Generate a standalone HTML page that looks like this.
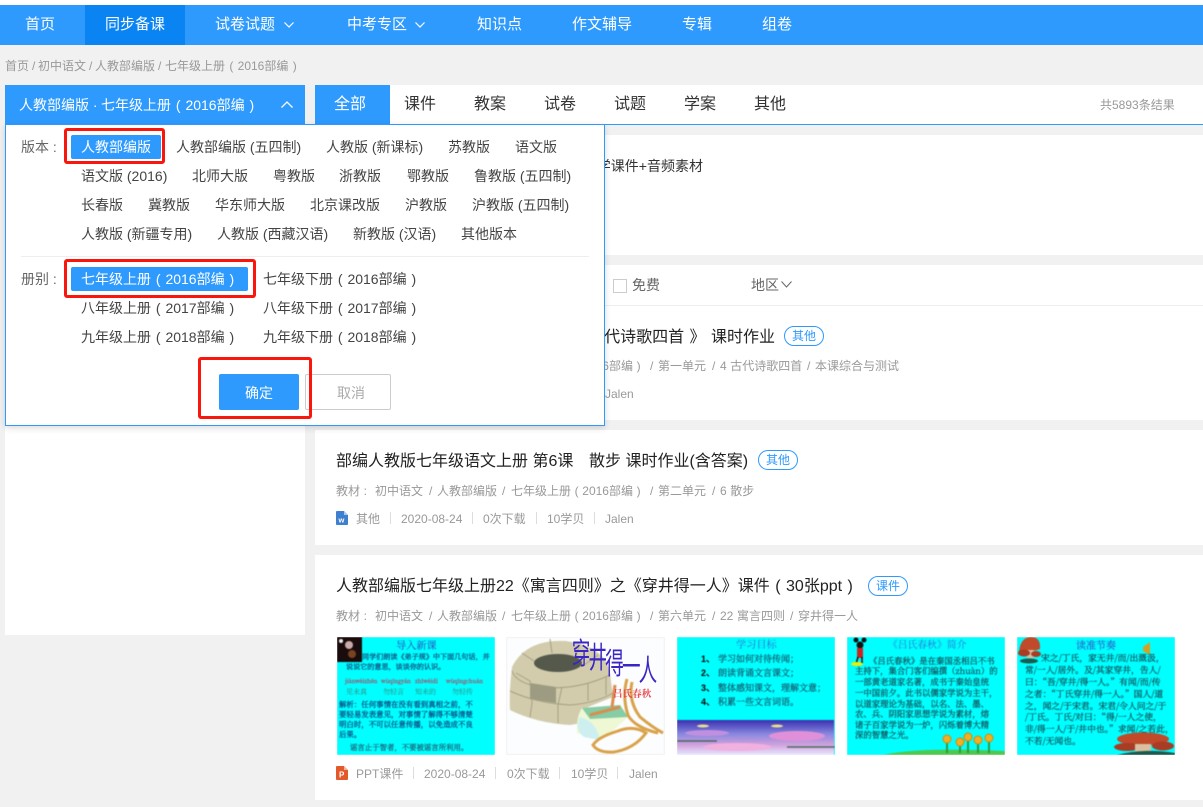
<!DOCTYPE html>
<html lang="zh"><head><meta charset="utf-8"><title>同步备课</title>
<style>
*{box-sizing:border-box;margin:0;padding:0}
html,body{width:1203px;height:807px;overflow:hidden}
body{background:#f1f1f1;position:relative;font-family:"Liberation Sans","Noto Sans CJK SC",sans-serif;color:#333}
.b{position:absolute}
.t{position:absolute;white-space:nowrap;line-height:20px;height:20px}
.nav{color:#fff;font-size:15px;margin-top:1px}
.tab{font-size:16px;color:#333;line-height:24px;height:24px;margin-top:1px}
.o{font-size:14px;color:#444}
.w{word-spacing:1px}
.title{font-size:16px;color:#222;line-height:24px;height:24px}
.m{font-size:12px;color:#999;word-spacing:.3px}
.sep{position:absolute;width:1px;height:12px;background:#ddd}
.tag{position:absolute;height:20px;width:40px;border:1px solid #2e9afe;border-radius:10px;color:#2e9afe;font-size:12px;line-height:18px;text-align:center}
.red{position:absolute;border:3px solid #f9160c;border-radius:3px}
.thumb{position:absolute;top:637px;height:118px;display:block}
.thumb text{font-family:"Noto Serif CJK SC","Liberation Serif",serif}
.sl{filter:blur(.45px)}
</style></head><body>
<div class="b" style="left:0;top:0;width:1203px;height:5px;background:#fff"></div>
<div class="b" style="left:0;top:5px;width:1203px;height:40px;background:#2e9afe"></div>
<div class="b" style="left:85px;top:5px;width:100px;height:40px;background:#0a84f2"></div>
<div class="t nav" style="left:25px;top:14px">首页</div>
<div class="t nav" style="left:105px;top:14px">同步备课</div>
<div class="t nav" style="left:215px;top:14px">试卷试题</div>
<svg class="b" style="left:283px;top:21px" width="12" height="8"><path d="M1.500 1.500L6 6L10.500 1.500" fill="none" stroke="#fff" stroke-width="1.200"/></svg>
<div class="t nav" style="left:347px;top:14px">中考专区</div>
<svg class="b" style="left:414px;top:21px" width="12" height="8"><path d="M1.500 1.500L6 6L10.500 1.500" fill="none" stroke="#fff" stroke-width="1.200"/></svg>
<div class="t nav" style="left:477px;top:14px">知识点</div>
<div class="t nav" style="left:572px;top:14px">作文辅导</div>
<div class="t nav" style="left:682px;top:14px">专辑</div>
<div class="t nav" style="left:762px;top:14px">组卷</div>

<div class="t m" style="left:5px;top:56px;word-spacing:0">首页</div>
<div class="t m" style="left:32px;top:56px">/</div>
<div class="t m" style="left:38px;top:56px">初中语文</div>
<div class="t m" style="left:89px;top:56px">/</div>
<div class="t m" style="left:95px;top:56px">人教部编版</div>
<div class="t m" style="left:158px;top:56px">/</div>
<div class="t m" style="left:165px;top:56px;word-spacing:1px">七年级上册 ( 2016部编 )</div>

<div class="b" style="left:315px;top:85px;width:888px;height:40px;background:#fff"></div>
<div class="b" style="left:315px;top:85px;width:75px;height:40px;background:#2e9afe"></div>
<div class="t tab" style="left:334px;top:92px;color:#fff">全部</div>
<div class="t tab" style="left:404px;top:92px">课件</div>
<div class="t tab" style="left:474px;top:92px">教案</div>
<div class="t tab" style="left:544px;top:92px">试卷</div>
<div class="t tab" style="left:614px;top:92px">试题</div>
<div class="t tab" style="left:684px;top:92px">学案</div>
<div class="t tab" style="left:754px;top:92px">其他</div>
<div class="t m" style="left:1100px;top:95px">共5893条结果</div>
<div class="b" style="left:315px;top:124px;width:888px;height:1px;background:#2e9afe"></div>

<!-- right cards -->
<div class="b" style="left:315px;top:135px;width:888px;height:120px;background:#fff"></div>
<div class="t" style="right:500px;top:156px;font-size:14px;color:#333">教学课件+音频素材</div>
<div class="b" style="left:315px;top:265px;width:888px;height:155px;background:#fff"></div>
<div class="b" style="left:315px;top:305px;width:888px;height:1px;background:#eee"></div>
<div class="b" style="left:613px;top:279px;width:14px;height:14px;border:1px solid #ccc;background:#fff"></div>
<div class="t" style="left:632px;top:275px;font-size:14px;color:#666">免费</div>
<div class="t" style="left:751px;top:275px;font-size:14px;color:#666">地区</div>
<svg class="b" style="left:780px;top:280px" width="13" height="9"><path d="M1.500 1.500L6.500 7L11.500 1.500" fill="none" stroke="#666" stroke-width="1"/></svg>
<div class="t title w" style="right:428px;top:326px">4《古代诗歌四首 》 课时作业</div>
<div class="tag" style="left:784px;top:326px">其他</div>
<div class="t m" style="left:511px;top:356px">七年级上册 ( 2016部编 )</div>
<div class="t m" style="left:650px;top:356px">/</div><div class="t m" style="left:658px;top:356px">第一单元</div>
<div class="t m" style="left:712px;top:356px">/</div><div class="t m" style="left:720px;top:356px">4 古代诗歌四首</div>
<div class="t m" style="left:807px;top:356px">/</div><div class="t m" style="left:815px;top:356px">本课综合与测试</div>
<div class="t m" style="left:605px;top:384px">Jalen</div>

<div class="b" style="left:315px;top:430px;width:888px;height:115px;background:#fff"></div>
<div class="t title" style="left:336px;top:450px">部编人教版七年级语文上册 第6课</div>
<div class="t title" style="left:589px;top:450px">散步 课时作业(含答案)</div>
<div class="tag" style="left:758px;top:450px">其他</div>
<div class="t m" style="left:336px;top:481px">教材 :</div><div class="t m" style="left:375px;top:481px">初中语文</div>
<div class="t m" style="left:429px;top:481px">/</div><div class="t m" style="left:437px;top:481px">人教部编版</div>
<div class="t m" style="left:502px;top:481px">/</div><div class="t m" style="left:511px;top:481px">七年级上册 ( 2016部编 )</div>
<div class="t m" style="left:650px;top:481px">/</div><div class="t m" style="left:658px;top:481px">第二单元</div>
<div class="t m" style="left:712px;top:481px">/</div><div class="t m" style="left:720px;top:481px">6 散步</div>
<svg class="b" style="left:336px;top:511px" width="12" height="14"><path d="M0 1Q0 0 1 0H8L12 4V13Q12 14 11 14H1Q0 14 0 13Z" fill="#3f7fcf"/><path d="M8 0L12 4H8Z" fill="#a9c8ef"/><text x="2.500" y="11.500" font-size="7.500" font-weight="bold" fill="#fff" font-family="Liberation Sans">w</text></svg>
<div class="t m" style="left:356px;top:509px">其他</div><div class="sep" style="left:390px;top:512px"></div>
<div class="t m" style="left:401px;top:509px">2020-08-24</div><div class="sep" style="left:472px;top:512px"></div>
<div class="t m" style="left:483px;top:509px">0次下载</div><div class="sep" style="left:536px;top:512px"></div>
<div class="t m" style="left:547px;top:509px">10学贝</div><div class="sep" style="left:594px;top:512px"></div>
<div class="t m" style="left:605px;top:509px">Jalen</div>

<div class="b" style="left:315px;top:555px;width:888px;height:245px;background:#fff"></div>
<div class="t title w" style="left:336px;top:575px">人教部编版七年级上册22《寓言四则》之《穿井得一人》课件 ( 30张ppt )</div>
<div class="tag" style="left:868px;top:576px">课件</div>
<div class="t m" style="left:336px;top:606px">教材 :</div><div class="t m" style="left:375px;top:606px">初中语文</div>
<div class="t m" style="left:429px;top:606px">/</div><div class="t m" style="left:437px;top:606px">人教部编版</div>
<div class="t m" style="left:502px;top:606px">/</div><div class="t m" style="left:511px;top:606px">七年级上册 ( 2016部编 )</div>
<div class="t m" style="left:650px;top:606px">/</div><div class="t m" style="left:658px;top:606px">第六单元</div>
<div class="t m" style="left:712px;top:606px">/</div><div class="t m" style="left:720px;top:606px">22 寓言四则</div>
<div class="t m" style="left:790px;top:606px">/</div><div class="t m" style="left:798px;top:606px">穿井得一人</div>

<!-- slide 1 -->
<svg class="thumb" style="left:337px" width="158" height="118" viewBox="0 0 158 118"><g class="sl">
<rect width="158" height="118" fill="#00ffff"/>
<rect width="25" height="25" fill="#1a0c0c"/><circle cx="12" cy="8" r="4" fill="#caa"/><circle cx="15" cy="17" r="4" fill="#742"/><circle cx="4" cy="4" r="2" fill="#eee"/>
<text x="59" y="12" font-size="10.200" fill="#2a3fb8">导入新课</text>
<g font-size="7.100" fill="#123a70" stroke="#123a70" stroke-width=".2"><text x="25" y="22">同学们朗读《弟子规》中下面几句话，并</text>
<text x="9" y="32">说说它的意思，谈谈你的认识。</text></g>
<g font-size="5.500" fill="#c0304c" stroke="#c0304c" stroke-width=".15"><text x="8" y="46">jiànwèizhēn</text><text x="44" y="46">wùqīngyán</text><text x="78" y="46">zhīwèidí</text><text x="109" y="46">wùqīngchuán</text></g>
<g font-size="7" fill="#3e7c70"><text x="9" y="57">见未真</text><text x="46" y="57">勿轻言</text><text x="78" y="57">知未的</text><text x="115" y="57">勿轻传</text></g>
<g font-size="7.450" fill="#0c3a78" stroke="#0c3a78" stroke-width=".2"><text x="2" y="70">解析：任何事情在没有看到真相之前，不</text>
<text x="2" y="80">要轻易发表意见，对事情了解得不够清楚</text>
<text x="2" y="90">明白时，不可以任意传播，以免造成不良</text>
<text x="2" y="100">后果。</text></g>
<text x="13" y="113" font-size="7.400" fill="#1e5a70" stroke="#1e5a70" stroke-width=".2">谣言止于智者，不要被谣言所利用。</text></g></svg>

<!-- slide 2 -->
<svg class="thumb" style="left:506px" width="159" height="118" viewBox="0 0 159 118"><g style="filter:blur(.6px)">
<rect x=".5" y=".5" width="158" height="117" fill="#fcfdfe" stroke="#eee"/>
<path d="M6 30Q3 55 4 73Q30 86 64 88L82 85L82 70L107 60L104 36Q100 10 60 4Q20 2 6 30Z" fill="#d2ccac"/>
<ellipse cx="52" cy="26" rx="24" ry="9" fill="#55594c"/>
<path d="M6 34Q10 46 34 50Q70 54 104 38M4 54Q30 66 64 68Q90 66 107 56M16 16L28 24M44 2L46 16M74 7L70 18M92 18L78 28M10 36L24 44L26 66L24 80M56 50L52 68L52 86M82 46L82 64M100 40L100 58" fill="none" stroke="#a6a184" stroke-width="1"/>
<path d="M24 46L50 50L50 66L24 62Z" fill="#9d9c82"/>
<path d="M76 71L114 68L122 80L100 100L94 103L71 96Q70 80 76 71Z" fill="#eef8d4"/>
<path d="M76 71L114 68L122 80L84 82Z" fill="#86cca4"/>
<path d="M74 80Q90 84 94 103L78 100Q68 92 74 80Z" fill="#cdeff0"/>
<path d="M84 78L114 70M109 48L106 70" fill="none" stroke="#d88e4e" stroke-width="3"/>
<path d="M121 42Q116 60 122 78Q128 90 152 96M126 45Q122 64 134 80Q146 90 157 96M87 108Q92 116 108 115Q128 112 140 96Q128 88 112 94Q92 100 87 108Z" fill="none" stroke="#d9a24a" stroke-width="3"/>
</g>
<g transform="scale(.62 1)" style="filter:blur(.3px)"><text x="106 133 160 187 214" y="27 31 37 40 44" font-size="30" fill="#3a26c4" style="font-family:'Noto Sans CJK SC',sans-serif">穿井得一人</text></g>
<text x="107" y="60" font-size="9.600" fill="#e8464c" font-weight="bold">吕氏春秋</text></svg>

<!-- slide 3 -->
<svg class="thumb" style="left:677px" width="158" height="118" viewBox="0 0 158 118"><defs><linearGradient id="s" x1="0" y1="0" x2="0" y2="1"><stop offset="0" stop-color="#3b2fb0"/><stop offset=".4" stop-color="#8888e0"/><stop offset=".7" stop-color="#d0a0dc"/><stop offset="1" stop-color="#e8e8ff"/></linearGradient></defs><g class="sl">
<rect width="158" height="118" fill="#00ffff"/>
<text x="59" y="11" font-size="10.200" fill="#2a6fd0">学习目标</text>
<g font-size="9" fill="#15556a" stroke="#15556a" stroke-width=".2"><text x="41" y="25">学习如何对待传闻；</text><text x="41" y="39">朗读背诵文言课文；</text><text x="41" y="54">整体感知课文，理解文意；</text><text x="41" y="68">积累一些文言词语。</text></g>
<g font-size="9" fill="#000" font-weight="bold"><text x="24" y="25" style="font-family:'Liberation Sans'">1、</text><text x="24" y="39" style="font-family:'Liberation Sans'">2、</text><text x="24" y="54" style="font-family:'Liberation Sans'">3、</text><text x="24" y="68" style="font-family:'Liberation Sans'">4、</text></g>
<rect y="83" width="157" height="35" fill="url(#s)"/>
<ellipse cx="30" cy="96" rx="22" ry="3" fill="#c090e0"/><ellipse cx="120" cy="99" rx="28" ry="5" fill="#e090d8"/><ellipse cx="60" cy="110" rx="34" ry="4" fill="#f0b0e0"/><ellipse cx="100" cy="89" rx="6" ry="1.500" fill="#e8e090"/><ellipse cx="26" cy="89" rx="6" ry="1.500" fill="#e8e090"/><path d="M0 104H40M110 110H158" stroke="#4a6a60" stroke-width="1.500"/></g></svg>

<!-- slide 4 -->
<svg class="thumb" style="left:847px" width="158" height="118" viewBox="0 0 158 118"><g class="sl">
<rect width="158" height="118" fill="#00ffff"/>
<circle cx="13" cy="8" r="3.500" fill="#111"/><circle cx="9" cy="3" r="2.500" fill="#111"/><circle cx="17" cy="3" r="2.500" fill="#111"/><rect x="10" y="11" width="6" height="10" fill="#c22"/><path d="M11 20L9 27M15 20L15 27" stroke="#111" stroke-width="1.500"/><ellipse cx="10" cy="27" rx="6" ry="2" fill="#ee0"/>
<text x="41" y="11" font-size="9.800" fill="#2a6fd0">《吕氏春秋》简介</text>
<g font-size="8.400" fill="#124a54" stroke="#124a54" stroke-width=".2"><text x="22" y="27">《吕氏春秋》是在秦国丞相吕不书</text><text x="8" y="37">主持下，集合门客们编撰（zhuàn）的</text><text x="8" y="48">一部黄老道家名著，成书于秦始皇统</text><text x="8" y="59">一中国前夕。此书以儒家学说为主干，</text><text x="8" y="70">以道家理论为基础，以名、法、墨、</text><text x="8" y="80">农、兵、阴阳家思想学说为素材，熔</text><text x="8" y="91">诸子百家学说为一炉，闪烁着博大精</text><text x="8" y="101">深的智慧之光。</text></g>
<path d="M36 118Q70 110 158 114V118Z" fill="#4fc84f"/>
<g fill="#2f9a3a"><rect x="99" y="102" width="2" height="14"/><rect x="112" y="105" width="2" height="11"/><rect x="120" y="100" width="2" height="16"/><rect x="130" y="103" width="2" height="13"/><rect x="141" y="101" width="2" height="15"/></g>
<g fill="#f0b020" stroke="#d08a10" stroke-width="1"><circle cx="100" cy="102" r="4"/><circle cx="113" cy="105" r="4"/><circle cx="121" cy="100" r="4"/><circle cx="131" cy="103" r="4"/><circle cx="142" cy="101" r="4"/></g></g></svg>

<!-- slide 5 -->
<svg class="thumb" style="left:1017px" width="158" height="118" viewBox="0 0 158 118"><g class="sl">
<rect width="158" height="118" fill="#00ffff"/>
<path d="M2 14Q4 0 14 0Q24 0 23 12Q12 16 2 14Z" fill="#c04a2a"/><rect x="10" y="13" width="7" height="8" fill="#d8c0a0"/><ellipse cx="7" cy="16" rx="6" ry="3.500" fill="#a83c24"/><ellipse cx="19" cy="17" rx="5" ry="3" fill="#a83c24"/><ellipse cx="12" cy="24" rx="9" ry="2.500" fill="#1b5a4e"/>
<text x="59" y="12" font-size="10" fill="#2a5fc8" stroke="#2a5fc8" stroke-width=".15">读准节奏</text>
<path d="M126 10L133 5V18L126 14Z" fill="#d8a020"/>
<g font-size="8.800" fill="#124a54" stroke="#124a54" stroke-width=".2"><text x="24" y="24">宋之/丁氏，家无井/而/出溉汲，</text><text x="8" y="36">常/一人/居外。及/其家穿井，告人/</text><text x="8" y="48">曰：“吾/穿井/得一人。”有闻/而/传</text><text x="8" y="60">之者：“丁氏穿井/得一人。”国人/道</text><text x="8" y="72">之，闻之/于宋君。宋君/令人问之/于</text><text x="8" y="83">/丁氏。丁氏/对曰：“得/一人之使，</text><text x="8" y="95">非/得一人/于/井中也。”求闻/之若此，</text><text x="8" y="107">不若/无闻也。</text></g>
<ellipse cx="126" cy="102" rx="26" ry="6.500" fill="#c04a2a"/><ellipse cx="110" cy="110" rx="13" ry="4" fill="#a83c24"/><ellipse cx="146" cy="109" rx="11" ry="4.500" fill="#a83c24"/><rect x="118" y="107" width="16" height="8" fill="#d8c0a0"/><path d="M100 118Q125 111 158 116V118Z" fill="#1b5a4e"/></g></svg>

<svg class="b" style="left:336px;top:766px" width="12" height="14"><path d="M0 1Q0 0 1 0H8L12 4V13Q12 14 11 14H1Q0 14 0 13Z" fill="#e25a2b"/><path d="M8 0L12 4H8Z" fill="#f3b49c"/><text x="3" y="11.500" font-size="8" font-weight="bold" fill="#fff" font-family="Liberation Sans">P</text></svg>
<div class="t m" style="left:356px;top:764px">PPT课件</div><div class="sep" style="left:413px;top:767px"></div>
<div class="t m" style="left:424px;top:764px">2020-08-24</div><div class="sep" style="left:495px;top:767px"></div>
<div class="t m" style="left:507px;top:764px">0次下载</div><div class="sep" style="left:559px;top:767px"></div>
<div class="t m" style="left:571px;top:764px">10学贝</div><div class="sep" style="left:617px;top:767px"></div>
<div class="t m" style="left:629px;top:764px">Jalen</div>

<!-- left column -->
<div class="b" style="left:5px;top:420px;width:300px;height:215px;background:#fff"></div>
<div class="b" style="left:5px;top:85px;width:300px;height:40px;background:#2e9afe"></div>
<div class="t" style="left:19px;top:95px;font-size:14px;color:#fff">人教部编版 ·</div>
<div class="t w" style="left:101px;top:95px;font-size:14px;color:#fff">七年级上册 ( 2016部编 )</div>
<svg class="b" style="left:280px;top:100px" width="14" height="10"><path d="M1.500 7.500L7 2L12.500 7.500" fill="none" stroke="#fff" stroke-width="1.300"/></svg>

<!-- dropdown -->
<div class="b" style="left:5px;top:124px;width:600px;height:302px;background:#fff;border:1px solid #2e9afe;box-shadow:0 2px 6px rgba(0,0,0,.15)"></div>
<div class="b" style="left:6px;top:124px;width:298px;height:1px;background:#2e9afe"></div>
<div class="t o" style="left:21px;top:137px;color:#666">版本 :</div>
<div class="b" style="left:71px;top:135px;width:90px;height:24px;background:#2e9afe;border-radius:2px"></div>
<div class="t o" style="left:81px;top:137px;color:#fff">人教部编版</div>
<div class="t o" style="left:176px;top:137px">人教部编版 (五四制)</div>
<div class="t o" style="left:326px;top:137px">人教版 (新课标)</div>
<div class="t o" style="left:448px;top:137px">苏教版</div>
<div class="t o" style="left:515px;top:137px">语文版</div>
<div class="t o" style="left:81px;top:166px">语文版 (2016)</div>
<div class="t o" style="left:192px;top:166px">北师大版</div>
<div class="t o" style="left:273px;top:166px">粤教版</div>
<div class="t o" style="left:339px;top:166px">浙教版</div>
<div class="t o" style="left:407px;top:166px">鄂教版</div>
<div class="t o" style="left:474px;top:166px">鲁教版 (五四制)</div>
<div class="t o" style="left:81px;top:195px">长春版</div>
<div class="t o" style="left:148px;top:195px">冀教版</div>
<div class="t o" style="left:215px;top:195px">华东师大版</div>
<div class="t o" style="left:310px;top:195px">北京课改版</div>
<div class="t o" style="left:405px;top:195px">沪教版</div>
<div class="t o" style="left:472px;top:195px">沪教版 (五四制)</div>
<div class="t o" style="left:81px;top:224px">人教版 (新疆专用)</div>
<div class="t o" style="left:217px;top:224px">人教版 (西藏汉语)</div>
<div class="t o" style="left:353px;top:224px">新教版 (汉语)</div>
<div class="t o" style="left:461px;top:224px">其他版本</div>
<div class="b" style="left:21px;top:256px;width:568px;height:1px;background:#eee"></div>
<div class="t o" style="left:21px;top:269px;color:#666">册别 :</div>
<div class="b" style="left:71px;top:267px;width:177px;height:24px;background:#2e9afe;border-radius:2px"></div>
<div class="t o w" style="left:81px;top:269px;color:#fff">七年级上册 ( 2016部编 )</div>
<div class="t o w" style="left:263px;top:269px">七年级下册 ( 2016部编 )</div>
<div class="t o w" style="left:81px;top:298px">八年级上册 ( 2017部编 )</div>
<div class="t o w" style="left:263px;top:298px">八年级下册 ( 2017部编 )</div>
<div class="t o w" style="left:81px;top:327px">九年级上册 ( 2018部编 )</div>
<div class="t o w" style="left:263px;top:327px">九年级下册 ( 2018部编 )</div>
<div class="b" style="left:219px;top:374px;width:80px;height:36px;background:#2e9afe;border-radius:2px;color:#fff;font-size:14px;line-height:38px;text-align:center">确定</div>
<div class="b" style="left:305px;top:374px;width:86px;height:36px;background:#fff;border:1px solid #ccc;border-radius:2px;color:#aaa;font-size:14px;line-height:36px;text-align:center;padding-left:6px">取消</div>

<div class="red" style="left:64px;top:128px;width:101px;height:36px"></div>
<div class="red" style="left:64px;top:259px;width:192px;height:39px"></div>
<div class="red" style="left:198px;top:357px;width:114px;height:62px"></div>
</body></html>
